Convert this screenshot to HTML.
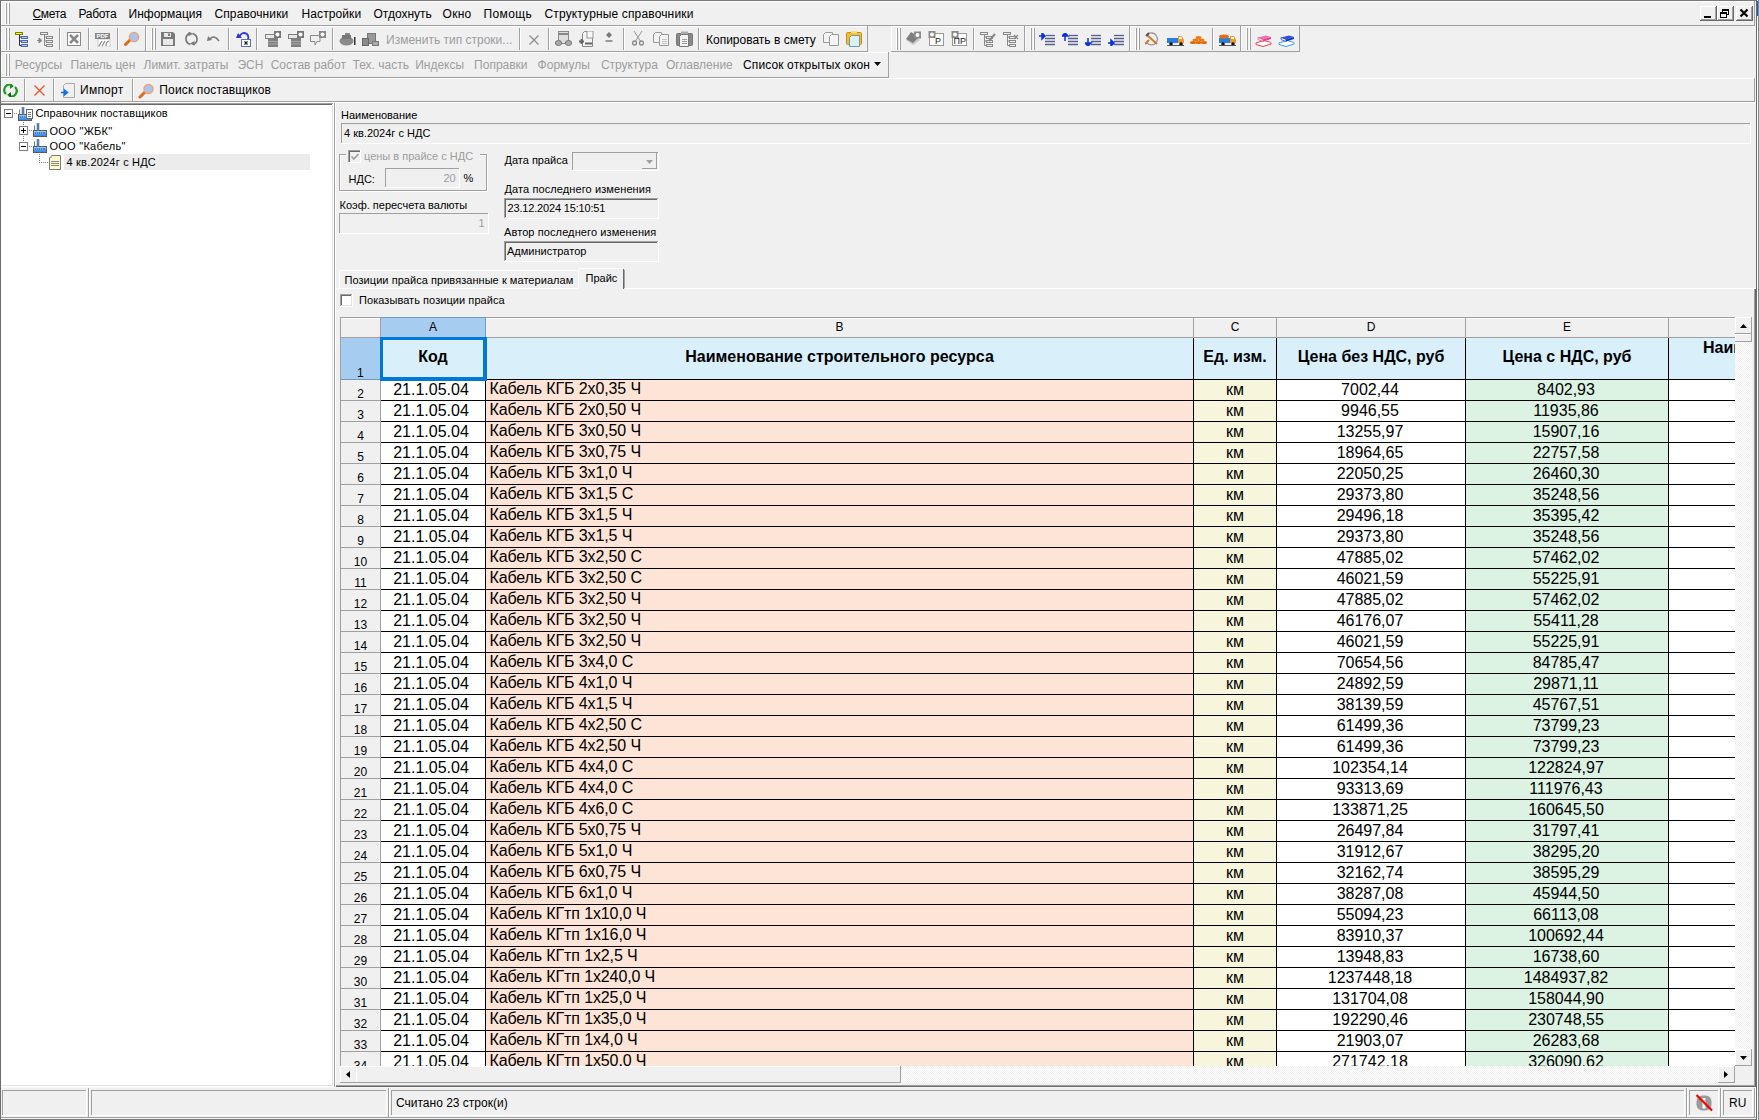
<!DOCTYPE html>
<html><head><meta charset="utf-8"><title>UI</title>
<style>
*{margin:0;padding:0;box-sizing:border-box}
html,body{width:1759px;height:1120px;overflow:hidden}
body{position:relative;background:#f0f0f0;font-family:"Liberation Sans",sans-serif;color:#000}
.a{position:absolute}
.t{position:absolute;white-space:pre;line-height:1}
.f12{font-size:12px}
.f11{font-size:11px}
.f16{font-size:16px}
.dis{color:#9d9d9d}
.hl{position:absolute;height:1px}
.vl{position:absolute;width:1px}
.tb{position:absolute;border-top:1px solid #fff;border-left:1px solid #fff;border-right:1px solid #a0a0a0;border-bottom:1px solid #a0a0a0}
.grip{position:absolute;width:2px;border-left:1px solid #fff;border-right:1px solid #a0a0a0}
.sep{position:absolute;width:2px;border-left:1px solid #a0a0a0;border-right:1px solid #fff}

</style></head><body>
<div class="a" style="left:0px;top:0px;width:1759px;height:1px;background:#7a7a7a;"></div>
<div class="a" style="left:0px;top:0px;width:1px;height:1120px;background:#6d6d6d;"></div>
<div class="a" style="left:0px;top:1119px;width:1759px;height:1px;background:#7a7a7a;"></div>
<div class="a" style="left:1756px;top:0px;width:1px;height:1120px;background:#6a6a6a;"></div>
<div class="a" style="left:1757px;top:0px;width:1px;height:1120px;background:#ffffff;"></div>
<div class="a" style="left:1758px;top:0px;width:1px;height:1120px;background:#888888;"></div>
<div class="a" style="left:1757px;top:1px;width:1px;height:15px;background:#1a5fc8;"></div>
<div class="a" style="left:1px;top:1px;width:1754px;height:1px;background:#fff;"></div>
<div class="a" style="left:1px;top:1px;width:1px;height:25px;background:#fff;"></div>
<div class="a" style="left:1px;top:25px;width:1754px;height:1px;background:#a0a0a0;"></div>
<div class="a" style="left:1754px;top:1px;width:1px;height:25px;background:#a0a0a0;"></div>
<div class="a" style="left:5px;top:3px;width:1px;height:21px;background:#fff;"></div><div class="a" style="left:6px;top:3px;width:1px;height:21px;background:#a0a0a0;"></div><div class="a" style="left:8px;top:3px;width:1px;height:21px;background:#fff;"></div><div class="a" style="left:9px;top:3px;width:1px;height:21px;background:#a0a0a0;"></div>
<div class="t f12 " style="left:32.5px;top:7.84px;letter-spacing:-0.3px">Смета</div>
<div class="t f12 " style="left:78.5px;top:7.84px;letter-spacing:-0.3px">Работа</div>
<div class="t f12 " style="left:128.5px;top:7.84px;letter-spacing:0px">Информация</div>
<div class="t f12 " style="left:214.5px;top:7.84px;letter-spacing:0.1px">Справочники</div>
<div class="t f12 " style="left:301.5px;top:7.84px;letter-spacing:0.1px">Настройки</div>
<div class="t f12 " style="left:373.5px;top:7.84px;letter-spacing:0px">Отдохнуть</div>
<div class="t f12 " style="left:442.5px;top:7.84px;letter-spacing:0.3px">Окно</div>
<div class="t f12 " style="left:483.5px;top:7.84px;letter-spacing:0.4px">Помощь</div>
<div class="t f12 " style="left:544.5px;top:7.84px;letter-spacing:0.15px">Структурные справочники</div>
<div class="a" style="left:33px;top:19px;width:9px;height:1px;background:#000;"></div>
<div class="a" style="left:1700px;top:6px;width:17px;height:15px;background:#f0f0f0;"></div><div class="a" style="left:1700px;top:6px;width:17px;height:1px;background:#fff;"></div><div class="a" style="left:1700px;top:6px;width:1px;height:15px;background:#fff;"></div><div class="a" style="left:1700px;top:20px;width:17px;height:1px;background:#696969;"></div><div class="a" style="left:1716px;top:6px;width:1px;height:15px;background:#696969;"></div>
<div class="a" style="left:1701px;top:19px;width:15px;height:1px;background:#a0a0a0;"></div>
<div class="a" style="left:1715px;top:7px;width:1px;height:13px;background:#a0a0a0;"></div>
<div class="a" style="left:1717px;top:6px;width:17px;height:15px;background:#f0f0f0;"></div><div class="a" style="left:1717px;top:6px;width:17px;height:1px;background:#fff;"></div><div class="a" style="left:1717px;top:6px;width:1px;height:15px;background:#fff;"></div><div class="a" style="left:1717px;top:20px;width:17px;height:1px;background:#696969;"></div><div class="a" style="left:1733px;top:6px;width:1px;height:15px;background:#696969;"></div>
<div class="a" style="left:1718px;top:19px;width:15px;height:1px;background:#a0a0a0;"></div>
<div class="a" style="left:1732px;top:7px;width:1px;height:13px;background:#a0a0a0;"></div>
<div class="a" style="left:1736px;top:6px;width:17px;height:15px;background:#f0f0f0;"></div><div class="a" style="left:1736px;top:6px;width:17px;height:1px;background:#fff;"></div><div class="a" style="left:1736px;top:6px;width:1px;height:15px;background:#fff;"></div><div class="a" style="left:1736px;top:20px;width:17px;height:1px;background:#696969;"></div><div class="a" style="left:1752px;top:6px;width:1px;height:15px;background:#696969;"></div>
<div class="a" style="left:1737px;top:19px;width:15px;height:1px;background:#a0a0a0;"></div>
<div class="a" style="left:1751px;top:7px;width:1px;height:13px;background:#a0a0a0;"></div>
<div class="a" style="left:1704px;top:16px;width:7px;height:2px;background:#000;"></div>
<svg class="a" style="left:1719px;top:8px" width="12" height="11" viewBox="0 0 12 11"><rect x="3.5" y="1.5" width="6" height="5" fill="none" stroke="#000"/><rect x="3" y="1" width="7" height="2" fill="#000"/><rect x="1.5" y="4.5" width="6" height="5" fill="#f0f0f0" stroke="#000"/><rect x="1" y="4" width="7" height="2" fill="#000"/></svg>
<svg class="a" style="left:1739px;top:8px" width="10" height="10" viewBox="0 0 10 10"><path d="M1.5 1.5L8.5 8.5M8.5 1.5L1.5 8.5" stroke="#000" stroke-width="2.2"/></svg>
<div class="a" style="left:1px;top:26px;width:145px;height:1px;background:#fff;"></div><div class="a" style="left:1px;top:26px;width:1px;height:26px;background:#fff;"></div><div class="a" style="left:1px;top:51px;width:145px;height:1px;background:#a0a0a0;"></div><div class="a" style="left:145px;top:26px;width:1px;height:26px;background:#a0a0a0;"></div>
<div class="a" style="left:146px;top:26px;width:722px;height:1px;background:#fff;"></div><div class="a" style="left:146px;top:26px;width:1px;height:26px;background:#fff;"></div><div class="a" style="left:146px;top:51px;width:722px;height:1px;background:#a0a0a0;"></div><div class="a" style="left:867px;top:26px;width:1px;height:26px;background:#a0a0a0;"></div>
<div class="a" style="left:891px;top:26px;width:134px;height:1px;background:#fff;"></div><div class="a" style="left:891px;top:26px;width:1px;height:26px;background:#fff;"></div><div class="a" style="left:891px;top:51px;width:134px;height:1px;background:#a0a0a0;"></div><div class="a" style="left:1024px;top:26px;width:1px;height:26px;background:#a0a0a0;"></div>
<div class="a" style="left:1025px;top:26px;width:105px;height:1px;background:#fff;"></div><div class="a" style="left:1025px;top:26px;width:1px;height:26px;background:#fff;"></div><div class="a" style="left:1025px;top:51px;width:105px;height:1px;background:#a0a0a0;"></div><div class="a" style="left:1129px;top:26px;width:1px;height:26px;background:#a0a0a0;"></div>
<div class="a" style="left:1130px;top:26px;width:111px;height:1px;background:#fff;"></div><div class="a" style="left:1130px;top:26px;width:1px;height:26px;background:#fff;"></div><div class="a" style="left:1130px;top:51px;width:111px;height:1px;background:#a0a0a0;"></div><div class="a" style="left:1240px;top:26px;width:1px;height:26px;background:#a0a0a0;"></div>
<div class="a" style="left:1241px;top:26px;width:59px;height:1px;background:#fff;"></div><div class="a" style="left:1241px;top:26px;width:1px;height:26px;background:#fff;"></div><div class="a" style="left:1241px;top:51px;width:59px;height:1px;background:#a0a0a0;"></div><div class="a" style="left:1299px;top:26px;width:1px;height:26px;background:#a0a0a0;"></div>
<div class="a" style="left:5px;top:28px;width:1px;height:22px;background:#fff;"></div><div class="a" style="left:6px;top:28px;width:1px;height:22px;background:#a0a0a0;"></div><div class="a" style="left:8px;top:28px;width:1px;height:22px;background:#fff;"></div><div class="a" style="left:9px;top:28px;width:1px;height:22px;background:#a0a0a0;"></div>
<div class="a" style="left:151px;top:28px;width:1px;height:22px;background:#fff;"></div><div class="a" style="left:152px;top:28px;width:1px;height:22px;background:#a0a0a0;"></div><div class="a" style="left:154px;top:28px;width:1px;height:22px;background:#fff;"></div><div class="a" style="left:155px;top:28px;width:1px;height:22px;background:#a0a0a0;"></div>
<div class="a" style="left:896px;top:28px;width:1px;height:22px;background:#fff;"></div><div class="a" style="left:897px;top:28px;width:1px;height:22px;background:#a0a0a0;"></div><div class="a" style="left:899px;top:28px;width:1px;height:22px;background:#fff;"></div><div class="a" style="left:900px;top:28px;width:1px;height:22px;background:#a0a0a0;"></div>
<div class="a" style="left:1030px;top:28px;width:1px;height:22px;background:#fff;"></div><div class="a" style="left:1031px;top:28px;width:1px;height:22px;background:#a0a0a0;"></div><div class="a" style="left:1033px;top:28px;width:1px;height:22px;background:#fff;"></div><div class="a" style="left:1034px;top:28px;width:1px;height:22px;background:#a0a0a0;"></div>
<div class="a" style="left:1135px;top:28px;width:1px;height:22px;background:#fff;"></div><div class="a" style="left:1136px;top:28px;width:1px;height:22px;background:#a0a0a0;"></div><div class="a" style="left:1138px;top:28px;width:1px;height:22px;background:#fff;"></div><div class="a" style="left:1139px;top:28px;width:1px;height:22px;background:#a0a0a0;"></div>
<div class="a" style="left:1246px;top:28px;width:1px;height:22px;background:#fff;"></div><div class="a" style="left:1247px;top:28px;width:1px;height:22px;background:#a0a0a0;"></div><div class="a" style="left:1249px;top:28px;width:1px;height:22px;background:#fff;"></div><div class="a" style="left:1250px;top:28px;width:1px;height:22px;background:#a0a0a0;"></div>
<div class="a" style="left:59px;top:28px;width:1px;height:22px;background:#a0a0a0;"></div><div class="a" style="left:60px;top:28px;width:1px;height:22px;background:#fff;"></div>
<div class="a" style="left:88px;top:28px;width:1px;height:22px;background:#a0a0a0;"></div><div class="a" style="left:89px;top:28px;width:1px;height:22px;background:#fff;"></div>
<div class="a" style="left:117px;top:28px;width:1px;height:22px;background:#a0a0a0;"></div><div class="a" style="left:118px;top:28px;width:1px;height:22px;background:#fff;"></div>
<div class="a" style="left:228px;top:28px;width:1px;height:22px;background:#a0a0a0;"></div><div class="a" style="left:229px;top:28px;width:1px;height:22px;background:#fff;"></div>
<div class="a" style="left:256px;top:28px;width:1px;height:22px;background:#a0a0a0;"></div><div class="a" style="left:257px;top:28px;width:1px;height:22px;background:#fff;"></div>
<div class="a" style="left:332px;top:28px;width:1px;height:22px;background:#a0a0a0;"></div><div class="a" style="left:333px;top:28px;width:1px;height:22px;background:#fff;"></div>
<div class="a" style="left:519px;top:28px;width:1px;height:22px;background:#a0a0a0;"></div><div class="a" style="left:520px;top:28px;width:1px;height:22px;background:#fff;"></div>
<div class="a" style="left:548px;top:28px;width:1px;height:22px;background:#a0a0a0;"></div><div class="a" style="left:549px;top:28px;width:1px;height:22px;background:#fff;"></div>
<div class="a" style="left:623px;top:28px;width:1px;height:22px;background:#a0a0a0;"></div><div class="a" style="left:624px;top:28px;width:1px;height:22px;background:#fff;"></div>
<div class="a" style="left:698px;top:28px;width:1px;height:22px;background:#a0a0a0;"></div><div class="a" style="left:699px;top:28px;width:1px;height:22px;background:#fff;"></div>
<div class="a" style="left:973px;top:28px;width:1px;height:22px;background:#a0a0a0;"></div><div class="a" style="left:974px;top:28px;width:1px;height:22px;background:#fff;"></div>
<div class="a" style="left:1212px;top:28px;width:1px;height:22px;background:#a0a0a0;"></div><div class="a" style="left:1213px;top:28px;width:1px;height:22px;background:#fff;"></div>
<div class="a" style="left:1px;top:52px;width:888px;height:1px;background:#fff;"></div><div class="a" style="left:1px;top:52px;width:1px;height:26px;background:#fff;"></div><div class="a" style="left:1px;top:77px;width:888px;height:1px;background:#a0a0a0;"></div><div class="a" style="left:888px;top:52px;width:1px;height:26px;background:#a0a0a0;"></div>
<div class="a" style="left:5px;top:54px;width:1px;height:22px;background:#fff;"></div><div class="a" style="left:6px;top:54px;width:1px;height:22px;background:#a0a0a0;"></div><div class="a" style="left:8px;top:54px;width:1px;height:22px;background:#fff;"></div><div class="a" style="left:9px;top:54px;width:1px;height:22px;background:#a0a0a0;"></div>
<div class="t f12 dis" style="left:14.8px;top:58.84px;">Ресурсы</div>
<div class="t f12 dis" style="left:70.6px;top:58.84px;">Панель цен</div>
<div class="t f12 dis" style="left:143.5px;top:58.84px;">Лимит. затраты</div>
<div class="t f12 dis" style="left:237.4px;top:58.84px;">ЭСН</div>
<div class="t f12 dis" style="left:270.7px;top:58.84px;">Состав работ</div>
<div class="t f12 dis" style="left:352.5px;top:58.84px;">Тех. часть</div>
<div class="t f12 dis" style="left:415.2px;top:58.84px;">Индексы</div>
<div class="t f12 dis" style="left:474.1px;top:58.84px;">Поправки</div>
<div class="t f12 dis" style="left:537.6px;top:58.84px;">Формулы</div>
<div class="t f12 dis" style="left:600.9px;top:58.84px;">Структура</div>
<div class="t f12 dis" style="left:665.9px;top:58.84px;">Оглавление</div>
<div class="t f12 " style="left:743px;top:58.84px;letter-spacing:0.12px">Список открытых окон</div>
<svg class="a" style="left:874px;top:62px" width="8" height="5"><path d="M0 0H7L3.5 4Z" fill="#000"/></svg>
<div class="a" style="left:1px;top:78px;width:1754px;height:1px;background:#fff;"></div><div class="a" style="left:1px;top:78px;width:1px;height:24px;background:#fff;"></div><div class="a" style="left:1px;top:101px;width:1754px;height:1px;background:#a0a0a0;"></div><div class="a" style="left:1754px;top:78px;width:1px;height:24px;background:#a0a0a0;"></div>
<div class="a" style="left:24px;top:79px;width:1px;height:22px;background:#a0a0a0;"></div><div class="a" style="left:25px;top:79px;width:1px;height:22px;background:#fff;"></div>
<div class="a" style="left:53px;top:79px;width:1px;height:22px;background:#a0a0a0;"></div><div class="a" style="left:54px;top:79px;width:1px;height:22px;background:#fff;"></div>
<div class="a" style="left:132px;top:79px;width:1px;height:22px;background:#a0a0a0;"></div><div class="a" style="left:133px;top:79px;width:1px;height:22px;background:#fff;"></div>
<div class="t f12 " style="left:80px;top:84.34px;letter-spacing:0.25px">Импорт</div>
<div class="t f12 " style="left:159.3px;top:84.34px;letter-spacing:0.15px">Поиск поставщиков</div>
<div class="t f12 dis" style="left:386px;top:33.84px;">Изменить тип строки...</div>
<div class="t f12 " style="left:706px;top:33.84px;">Копировать в смету</div>
<svg class="a" style="left:15px;top:32px" width="14" height="15" viewBox="0 0 14 15"><rect x="0.5" y="0.5" width="7" height="2" fill="#ff0" stroke="#808000"/><path d="M4.5 3V13.5H6" stroke="#1e2a5a" fill="none"/><path d="M4.5 5H6M4.5 9H6" stroke="#1e2a5a"/><rect x="6.5" y="4.5" width="6" height="2" fill="#a8cdf4" stroke="#4f6c9c"/><rect x="6.5" y="8.5" width="6" height="2" fill="#a8cdf4" stroke="#4f6c9c"/><rect x="6.5" y="12.5" width="6" height="2" fill="#a8cdf4" stroke="#4f6c9c"/></svg>
<svg class="a" style="left:37px;top:32px" width="17" height="15" viewBox="0 0 17 15"><rect x="3.5" y="0.5" width="7" height="2" fill="#eee" stroke="#888"/><path d="M7.5 3V13.5H9M7.5 5H9M7.5 9H9" stroke="#888" fill="none"/><rect x="9.5" y="4.5" width="6" height="2" fill="#eee" stroke="#888"/><rect x="9.5" y="8.5" width="6" height="2" fill="#eee" stroke="#888"/><rect x="9.5" y="12.5" width="6" height="2" fill="#eee" stroke="#888"/><path d="M0 8.5H3M2 6L5 8.5L2 11Z" stroke="#888" fill="#888"/></svg>
<svg class="a" style="left:67px;top:32px" width="14" height="14" viewBox="0 0 14 14"><rect x="0.5" y="0.5" width="13" height="13" fill="#fff" stroke="#888"/><path d="M3 3L11 11M11 3L3 11" stroke="#888" stroke-width="2.5"/></svg>
<svg class="a" style="left:95px;top:32px" width="16" height="15" viewBox="0 0 16 15"><rect x="3" y="7" width="12" height="8" fill="#fff" stroke="#ccc"/><path d="M4 14L7 9M7 14L10 9M11 14Q11 10 14 9" stroke="#888" stroke-width="1.3" fill="none"/><rect x="0" y="1" width="15" height="6" fill="#858585"/><text x="1.5" y="6" font-size="6" font-weight="bold" fill="#fff" font-family="Liberation Sans">PDF</text></svg>
<svg class="a" style="left:123px;top:31px" width="17" height="16" viewBox="0 0 17 16"><path d="M2.5 13.5L8 8" stroke="#e06a18" stroke-width="3" stroke-linecap="round"/><circle cx="11" cy="6" r="4.6" fill="#a9c4ee" stroke="#f0a070" stroke-width="1.4"/></svg>
<svg class="a" style="left:161px;top:32px" width="15" height="14" viewBox="0 0 15 14"><path d="M0 0H12L14 2V14H0Z" fill="#7a7a7a"/><rect x="3" y="1" width="7" height="4" fill="#e8e8e8"/><rect x="7" y="1.5" width="2" height="2.5" fill="#7a7a7a"/><rect x="2" y="7" width="10" height="6" fill="#e8e8e8"/></svg>
<svg class="a" style="left:184px;top:32px" width="15" height="14" viewBox="0 0 15 14"><path d="M6.5 12.3A5.6 5.6 0 0 1 5.5 1.6" stroke="#7a7a7a" stroke-width="1.7" fill="none"/><path d="M8.5 1.7A5.6 5.6 0 0 1 9.5 12.4" stroke="#7a7a7a" stroke-width="1.7" fill="none"/><path d="M4.5 -0.5L9 1.8L4.5 4.3Z" fill="#7a7a7a"/><path d="M10.5 13.8L6 11.6L10.5 9Z" fill="#7a7a7a"/></svg>
<svg class="a" style="left:207px;top:35px" width="13" height="8" viewBox="0 0 13 8"><path d="M3 4Q7 -1 12 6" stroke="#7a7a7a" stroke-width="1.5" fill="none"/><path d="M0 6L1 1L5 5Z" fill="#7a7a7a"/></svg>
<svg class="a" style="left:236px;top:32px" width="15" height="15" viewBox="0 0 15 15"><path d="M3 5Q6 -1 11 2Q13 4 12 8" stroke="#3333e0" stroke-width="1.8" fill="none"/><path d="M0 6L2 1L6 6Z" fill="#3333e0"/><rect x="5.5" y="7.5" width="9" height="7" fill="#fff" stroke="#5a6fb0"/><path d="M8 9.5L12 12.5M12 9.5L8 12.5M10 9V13" stroke="#111" stroke-width="0.9"/></svg>
<svg class="a" style="left:265px;top:31px" width="16" height="16" viewBox="0 0 16 16"><rect x="3" y="7" width="10" height="9" fill="#808080"/><path d="M3 10.5H13M3 13H13" stroke="#a8a8a8"/><rect x="0.5" y="3.5" width="11" height="4" fill="#e8e8e8" stroke="#808080"/><rect x="9.0" y="0.0" width="7" height="7" fill="#777"/><circle cx="12.5" cy="3.5" r="2" fill="#fff"/></svg>
<svg class="a" style="left:288px;top:31px" width="16" height="16" viewBox="0 0 16 16"><rect x="3" y="7" width="10" height="9" fill="#808080"/><path d="M3 10.5H13M3 13H13" stroke="#a8a8a8"/><rect x="0.5" y="3.5" width="11" height="4" fill="#e8e8e8" stroke="#808080"/><rect x="9.0" y="0.0" width="7" height="7" fill="#777"/><circle cx="12.5" cy="3.5" r="2" fill="#fff"/></svg>
<svg class="a" style="left:310px;top:31px" width="16" height="15" viewBox="0 0 16 15"><path d="M0.5 4.5H10V10.5H7L5 14V10.5H0.5Z" fill="none" stroke="#888"/><rect x="9.0" y="0.0" width="7" height="7" fill="#888"/><circle cx="12.5" cy="3.5" r="2" fill="#fff"/></svg>
<svg class="a" style="left:339px;top:33px" width="17" height="13" viewBox="0 0 17 13"><ellipse cx="7.5" cy="8" rx="7" ry="4.5" fill="#8a8a8a"/><rect x="3" y="2" width="9" height="4" fill="#777"/><rect x="6" y="0" width="5" height="2" fill="#888"/><rect x="15" y="4" width="1.5" height="8" fill="#333"/></svg>
<svg class="a" style="left:362px;top:33px" width="17" height="13" viewBox="0 0 17 13"><rect x="5.5" y="0.5" width="8" height="10" fill="#999" stroke="#777"/><rect x="0.5" y="5.5" width="6" height="7" fill="#8a8a8a" stroke="#666"/><rect x="10.5" y="8.5" width="6" height="4" fill="#aaa" stroke="#777"/></svg>
<svg class="a" style="left:529px;top:35px" width="10" height="10" viewBox="0 0 10 10"><path d="M0.5 0.5L9.5 9.5M9.5 0.5L0.5 9.5" stroke="#8c8c8c" stroke-width="1.2"/></svg>
<svg class="a" style="left:555px;top:31px" width="17" height="16" viewBox="0 0 17 16"><rect x="3.5" y="0.5" width="10" height="12" fill="#ddd" stroke="#888"/><rect x="4" y="2" width="9" height="2" fill="#888"/><ellipse cx="3.5" cy="12" rx="3.2" ry="2.5" fill="#aaa" stroke="#777"/><ellipse cx="13.5" cy="12" rx="3.2" ry="2.5" fill="#aaa" stroke="#777"/></svg>
<svg class="a" style="left:579px;top:31px" width="15" height="16" viewBox="0 0 15 16"><path d="M3.5 2.5L5.5 0.5H13.5V15.5H3.5Z" fill="#f4f4f4" stroke="#888"/><rect x="8" y="0" width="6" height="7" fill="#f8f8f8" stroke="#999"/><path d="M0 10.5H5M2.5 8V13M6 12.5H13" stroke="#666" stroke-width="1.8"/></svg>
<svg class="a" style="left:605px;top:31px" width="8" height="13" viewBox="0 0 8 13"><path d="M4 1L7 4L4 7L1 4Z" fill="#777"/><rect x="0.5" y="9" width="7" height="2" fill="#999"/></svg>
<svg class="a" style="left:632px;top:31px" width="12" height="15" viewBox="0 0 12 15"><path d="M2 0L9 11M10 0L3 11" stroke="#999" stroke-width="1"/><circle cx="2.5" cy="12" r="2" fill="none" stroke="#888" stroke-width="1.3"/><circle cx="9.5" cy="12" r="2" fill="none" stroke="#888" stroke-width="1.3"/></svg>
<svg class="a" style="left:653px;top:32px" width="16" height="14" viewBox="0 0 16 14"><path d="M0.5 2.5L2.5 0.5H8.5V10.5H0.5Z" fill="#f2f2f2" stroke="#999"/><path d="M6.5 4.5L8.5 2.5H15.5V13.5H6.5Z" fill="#f2f2f2" stroke="#999"/><path d="M9 7.5H14M9 9.5H14M9 11.5H14" stroke="#b0b0b0" stroke-width="0.7"/></svg>
<svg class="a" style="left:676px;top:31px" width="17" height="16" viewBox="0 0 17 16"><rect x="0.5" y="2.5" width="16" height="12" rx="1" fill="#888" stroke="#777"/><rect x="5" y="0.5" width="7" height="3" fill="#aaa"/><path d="M3.5 5.5L5.5 3.5H12.5V15.5H3.5Z" fill="#f2f2f2" stroke="#777"/><path d="M6 8.5H11M6 10.5H11M6 12.5H11" stroke="#777" stroke-width="0.7"/></svg>
<svg class="a" style="left:823px;top:32px" width="17" height="15" viewBox="0 0 17 15"><path d="M0.5 2.5L2.5 0.5H9.5V10.5H0.5Z" fill="#f4f4f4" stroke="#9a9a9a" stroke-width="1"/><path d="M6.5 4.5L8.5 2.5H15.5V13.5H6.5Z" fill="#f4f4f4" stroke="#9a9a9a"/></svg>
<svg class="a" style="left:846px;top:31px" width="17" height="16" viewBox="0 0 17 16"><rect x="0.5" y="1.5" width="15" height="12" rx="1" fill="#ffba20" stroke="#c08a30"/><rect x="5" y="0" width="6" height="2.5" rx="1" fill="#f8e070"/><path d="M3.5 6.5L5.5 4.5H13.5V15.5H3.5Z" fill="#d6f2f6" stroke="#6f9aa6"/></svg>
<svg class="a" style="left:905px;top:31px" width="17" height="16" viewBox="0 0 17 16"><path d="M1 9L8 4L15 9L8 14Z" fill="#c8c8c8"/><path d="M1 8L6 1L14 6L8 12Z" fill="#7f7f7f"/><rect x="9.0" y="0.5" width="7" height="7" fill="#8a8a8a"/><circle cx="12.5" cy="4" r="2" fill="#fff"/></svg>
<svg class="a" style="left:928px;top:31px" width="17" height="16" viewBox="0 0 17 16"><rect x="1.5" y="2.5" width="14" height="12" fill="#fff" stroke="#999"/><rect x="0.5" y="0.0" width="7" height="7" fill="#8a8a8a"/><circle cx="4" cy="3.5" r="2" fill="#fff"/><text x="7" y="13" font-size="9" font-family="Liberation Sans" fill="#222">P</text></svg>
<svg class="a" style="left:951px;top:31px" width="17" height="16" viewBox="0 0 17 16"><rect x="1.5" y="2.5" width="14" height="12" fill="#fff" stroke="#999"/><rect x="0.5" y="0.0" width="7" height="7" fill="#8a8a8a"/><circle cx="4" cy="3.5" r="2" fill="#fff"/><text x="2.5" y="13" font-size="9" font-family="Liberation Sans" fill="#222">ПР</text></svg>
<svg class="a" style="left:980px;top:32px" width="16" height="15" viewBox="0 0 16 15"><rect x="0.5" y="0.5" width="7" height="2" fill="#eee" stroke="#888"/><path d="M4.5 3V13.5H6M4.5 5H6M4.5 9H6" stroke="#888" fill="none"/><rect x="6.5" y="4.5" width="6" height="2" fill="#eee" stroke="#888"/><rect x="6.5" y="8.5" width="6" height="2" fill="#eee" stroke="#888"/><rect x="6.5" y="12.5" width="6" height="2" fill="#eee" stroke="#888"/><path d="M9 9L15 2" stroke="#888" stroke-width="2"/></svg>
<svg class="a" style="left:1003px;top:32px" width="16" height="15" viewBox="0 0 16 15"><rect x="0.5" y="0.5" width="7" height="2" fill="#eee" stroke="#888"/><path d="M4.5 3V13.5H6M4.5 5H6M4.5 9H6" stroke="#888" fill="none"/><rect x="6.5" y="4.5" width="6" height="2" fill="#eee" stroke="#888"/><rect x="6.5" y="8.5" width="6" height="2" fill="#eee" stroke="#888"/><rect x="6.5" y="12.5" width="6" height="2" fill="#eee" stroke="#888"/><path d="M11 3L15 7M15 3L11 7" stroke="#888" stroke-width="1.2"/></svg>
<svg class="a" style="left:1039px;top:33px" width="17" height="13" viewBox="0 0 17 13"><path d="M7 2.5H16" stroke="#55608f" stroke-width="1.3"/><path d="M6 5.5H16M6 8.5H16M6 11.5H16" stroke="#55608f" stroke-width="1.3"/><path d="M0 3H4M3 0L6 3L3 6Z" stroke="#0c2ee0" fill="#0c2ee0" stroke-width="1.5"/></svg>
<svg class="a" style="left:1062px;top:33px" width="17" height="13" viewBox="0 0 17 13"><path d="M7 2.5H16" stroke="#55608f" stroke-width="1.3"/><path d="M6 5.5H16M6 8.5H16M6 11.5H16" stroke="#55608f" stroke-width="1.3"/><path d="M3 8V3M0 3L3 0L6 3Z" stroke="#0c2ee0" fill="#0c2ee0" stroke-width="1.5"/></svg>
<svg class="a" style="left:1085px;top:33px" width="17" height="13" viewBox="0 0 17 13"><path d="M6 2.5H16" stroke="#55608f" stroke-width="1.3"/><path d="M6 5.5H16M6 8.5H16M6 11.5H16" stroke="#55608f" stroke-width="1.3"/><path d="M3 5V10M0 10L3 13L6 10Z" stroke="#0c2ee0" fill="#0c2ee0" stroke-width="1.5"/></svg>
<svg class="a" style="left:1108px;top:33px" width="17" height="13" viewBox="0 0 17 13"><path d="M6 2.5H16" stroke="#55608f" stroke-width="1.3"/><path d="M6 5.5H16M6 8.5H16M6 11.5H16" stroke="#55608f" stroke-width="1.3"/><path d="M0 10H4M3 7L6 10L3 13Z" stroke="#0c2ee0" fill="#0c2ee0" stroke-width="1.5"/></svg>
<svg class="a" style="left:1145px;top:32px" width="15" height="14" viewBox="0 0 15 14"><path d="M3 2A6 6 0 1 1 2 11" stroke="#999" stroke-width="1.3" fill="none"/><path d="M2 3L12 12" stroke="#c87830" stroke-width="2"/><path d="M0 12L4 8" stroke="#c87830" stroke-width="2"/><path d="M1 4L4 1" stroke="#555" stroke-width="2"/></svg>
<svg class="a" style="left:1167px;top:35px" width="17" height="11" viewBox="0 0 17 11"><rect x="0" y="3" width="11" height="5" fill="#2a7ee0"/><path d="M11 1H15L17 5V8H11Z" fill="#f29a20"/><rect x="12" y="2" width="3" height="2" fill="#fff"/><circle cx="4" cy="9" r="1.8" fill="#111"/><circle cx="14" cy="9" r="1.8" fill="#111"/><rect x="0" y="10" width="17" height="1" fill="#555"/></svg>
<svg class="a" style="left:1190px;top:36px" width="17" height="8" viewBox="0 0 17 8"><ellipse cx="8.5" cy="1.5" rx="3" ry="1.5" fill="#ee7a10"/><ellipse cx="5.5" cy="4" rx="3" ry="1.5" fill="#ee7a10"/><ellipse cx="11.5" cy="4" rx="3" ry="1.5" fill="#ee7a10"/><ellipse cx="3" cy="6.5" rx="3" ry="1.5" fill="#e06a08"/><ellipse cx="8.5" cy="6.5" rx="3" ry="1.5" fill="#e06a08"/><ellipse cx="14" cy="6.5" rx="3" ry="1.5" fill="#e06a08"/></svg>
<svg class="a" style="left:1219px;top:34px" width="17" height="12" viewBox="0 0 17 12"><g transform="translate(0,1)"><rect x="0" y="3" width="11" height="5" fill="#2a7ee0"/><path d="M11 1H15L17 5V8H11Z" fill="#f29a20"/><rect x="12" y="2" width="3" height="2" fill="#fff"/><circle cx="4" cy="9" r="1.8" fill="#111"/><circle cx="14" cy="9" r="1.8" fill="#111"/><rect x="0" y="10" width="17" height="1" fill="#555"/></g><ellipse cx="5" cy="2.5" rx="5" ry="2" fill="#e07018"/></svg>
<svg class="a" style="left:1255px;top:34px" width="17" height="13" viewBox="0 0 17 13"><path d="M1 9L9 6.5L16 8.5L8 11Z" fill="#fff" stroke="#e84050" stroke-width="1"/><path d="M1 9V10.5L8 12.5L16 10V8.5" fill="#fff" stroke="#e84050" stroke-width="1"/><path d="M3 3.5L11 1.5L16 3L8 5.5Z" fill="#f070c0"/><path d="M3 3.5V5.5L8 7.5V5.5Z" fill="#fff" stroke="#e04080" stroke-width="0.7"/><path d="M8 5.5V7.5L16 5V3Z" fill="#e04080"/></svg>
<svg class="a" style="left:1278px;top:34px" width="17" height="13" viewBox="0 0 17 13"><path d="M1 9L9 6.5L16 8.5L8 11Z" fill="#fff" stroke="#30a0e0" stroke-width="1"/><path d="M1 9V10.5L8 12.5L16 10V8.5" fill="#fff" stroke="#30a0e0" stroke-width="1"/><path d="M3 3.5L11 1.5L16 3L8 5.5Z" fill="#3050e0"/><path d="M3 3.5V5.5L8 7.5V5.5Z" fill="#fff" stroke="#2030b0" stroke-width="0.7"/><path d="M8 5.5V7.5L16 5V3Z" fill="#2030b0"/></svg>
<svg class="a" style="left:3px;top:84px" width="15" height="13" viewBox="0 0 15 13"><path d="M3 10A5.5 5.5 0 0 1 9 1" stroke="#1a9a1a" stroke-width="2.2" fill="none"/><path d="M12 3A5.5 5.5 0 0 1 6 12" stroke="#1a9a1a" stroke-width="2.2" fill="none"/><path d="M7 0L11 2L7 5Z" fill="#1a8a1a"/><path d="M8 13L4 11L8 8Z" fill="#0a6a0a"/></svg>
<svg class="a" style="left:34px;top:85px" width="11" height="11" viewBox="0 0 11 11"><path d="M0.5 0.5L10.5 10.5M10.5 0.5L0.5 10.5" stroke="#f05028" stroke-width="1.3"/></svg>
<svg class="a" style="left:61px;top:83px" width="15" height="15" viewBox="0 0 15 15"><path d="M2.5 2.5L4.5 0.5H13.5V14.5H2.5Z" fill="#f0f0f0" stroke="#aaa"/><path d="M0 9.5H5M3.5 7L6.5 9.5L3.5 12Z" stroke="#1a70e0" fill="#1a70e0" stroke-width="1.5"/></svg>
<svg class="a" style="left:138px;top:83px" width="17" height="16" viewBox="0 0 17 16"><path d="M2 14L7 9" stroke="#e06a18" stroke-width="3" stroke-linecap="round"/><circle cx="10.5" cy="6" r="4.5" fill="#a9c4ee" stroke="#f0a070" stroke-width="1.4"/></svg>
<div class="a" style="left:1px;top:102px;width:1754px;height:1px;background:#fff;"></div>
<div class="a" style="left:1px;top:103px;width:333px;height:984px;background:#fff;"></div>
<div class="a" style="left:1px;top:103px;width:332px;height:1px;background:#a0a0a0;"></div>
<div class="a" style="left:1px;top:104px;width:331px;height:1px;background:#696969;"></div>
<div class="a" style="left:332px;top:105px;width:1px;height:981px;background:#e3e3e3;"></div>
<div class="a" style="left:1px;top:1085px;width:332px;height:1px;background:#e3e3e3;"></div>
<div class="a" style="left:334px;top:103px;width:1px;height:984px;background:#a0a0a0;"></div>
<div class="a" style="left:335px;top:103px;width:1px;height:984px;background:#fff;"></div>
<div class="a" style="left:4px;top:109px;width:9px;height:9px;background:#fff;"></div><div class="a" style="left:4px;top:109px;width:9px;height:1px;background:#808080;"></div><div class="a" style="left:4px;top:109px;width:1px;height:9px;background:#808080;"></div><div class="a" style="left:4px;top:117px;width:9px;height:1px;background:#808080;"></div><div class="a" style="left:12px;top:109px;width:1px;height:9px;background:#808080;"></div><div class="a" style="left:6px;top:113px;width:5px;height:1px;background:#000;"></div>
<div class="a" style="left:19px;top:126px;width:9px;height:9px;background:#fff;"></div><div class="a" style="left:19px;top:126px;width:9px;height:1px;background:#808080;"></div><div class="a" style="left:19px;top:126px;width:1px;height:9px;background:#808080;"></div><div class="a" style="left:19px;top:134px;width:9px;height:1px;background:#808080;"></div><div class="a" style="left:27px;top:126px;width:1px;height:9px;background:#808080;"></div><div class="a" style="left:21px;top:130px;width:5px;height:1px;background:#000;"></div><div class="a" style="left:23px;top:128px;width:1px;height:5px;background:#000;"></div>
<div class="a" style="left:19px;top:142px;width:9px;height:9px;background:#fff;"></div><div class="a" style="left:19px;top:142px;width:9px;height:1px;background:#808080;"></div><div class="a" style="left:19px;top:142px;width:1px;height:9px;background:#808080;"></div><div class="a" style="left:19px;top:150px;width:9px;height:1px;background:#808080;"></div><div class="a" style="left:27px;top:142px;width:1px;height:9px;background:#808080;"></div><div class="a" style="left:21px;top:146px;width:5px;height:1px;background:#000;"></div>
<div class="a" style="left:14px;top:113px;width:1px;height:1px;background:#808080;"></div>
<div class="a" style="left:16px;top:113px;width:1px;height:1px;background:#808080;"></div>
<div class="a" style="left:23px;top:122px;width:1px;height:1px;background:#808080;"></div>
<div class="a" style="left:23px;top:124px;width:1px;height:1px;background:#808080;"></div>
<div class="a" style="left:23px;top:136px;width:1px;height:1px;background:#808080;"></div>
<div class="a" style="left:23px;top:138px;width:1px;height:1px;background:#808080;"></div>
<div class="a" style="left:23px;top:140px;width:1px;height:1px;background:#808080;"></div>
<div class="a" style="left:29px;top:130px;width:1px;height:1px;background:#808080;"></div>
<div class="a" style="left:31px;top:130px;width:1px;height:1px;background:#808080;"></div>
<div class="a" style="left:29px;top:146px;width:1px;height:1px;background:#808080;"></div>
<div class="a" style="left:31px;top:146px;width:1px;height:1px;background:#808080;"></div>
<div class="a" style="left:39px;top:154px;width:1px;height:1px;background:#808080;"></div>
<div class="a" style="left:39px;top:156px;width:1px;height:1px;background:#808080;"></div>
<div class="a" style="left:39px;top:158px;width:1px;height:1px;background:#808080;"></div>
<div class="a" style="left:39px;top:160px;width:1px;height:1px;background:#808080;"></div>
<div class="a" style="left:39px;top:162px;width:1px;height:1px;background:#808080;"></div>
<div class="a" style="left:41px;top:162px;width:1px;height:1px;background:#808080;"></div>
<div class="a" style="left:43px;top:162px;width:1px;height:1px;background:#808080;"></div>
<div class="a" style="left:45px;top:162px;width:1px;height:1px;background:#808080;"></div>
<div class="a" style="left:47px;top:162px;width:1px;height:1px;background:#808080;"></div>
<svg class="a" style="left:18px;top:107px" width="15" height="14" viewBox="0 0 15 14"><defs><linearGradient id="fg0" x1="0" y1="0" x2="0" y2="1"><stop offset="0" stop-color="#9fd3ff"/><stop offset="1" stop-color="#1f7ff0"/></linearGradient></defs><rect x="0.5" y="7.5" width="13" height="6" fill="url(#fg0)" stroke="#5a5a5a"/><rect x="4" y="0.5" width="2" height="7" fill="#3d8ef0" stroke="#6a6a6a" stroke-width="0.6"/><path d="M1.5 7V2.5" stroke="#555" stroke-width="0.8"/><path d="M2 10H3M4 10H5M6 10H7M8 10H9M10 10H12" stroke="#333" stroke-width="0.8"/><rect x="8.5" y="2.5" width="6" height="9" fill="#fff" stroke="#666"/><path d="M10 5.5H13M10 7.5H13M10 9.5H13" stroke="#555" stroke-width="0.8"/></svg>
<svg class="a" style="left:33px;top:123px" width="14" height="14" viewBox="0 0 14 14"><defs><linearGradient id="fg" x1="0" y1="0" x2="0" y2="1"><stop offset="0" stop-color="#9fd3ff"/><stop offset="1" stop-color="#1f7ff0"/></linearGradient></defs><rect x="0.5" y="7.5" width="13" height="6" fill="url(#fg)" stroke="#5a5a5a"/><rect x="4" y="0.5" width="2" height="7" fill="#3d8ef0" stroke="#6a6a6a" stroke-width="0.6"/><path d="M1.5 7V2.5" stroke="#555" stroke-width="0.8"/><path d="M2 10H3M4 10H5M6 10H7M8 10H9M10 10H12" stroke="#333" stroke-width="0.8"/></svg>
<svg class="a" style="left:33px;top:139px" width="14" height="14" viewBox="0 0 14 14"><defs><linearGradient id="fg2" x1="0" y1="0" x2="0" y2="1"><stop offset="0" stop-color="#9fd3ff"/><stop offset="1" stop-color="#1f7ff0"/></linearGradient></defs><rect x="0.5" y="7.5" width="13" height="6" fill="url(#fg2)" stroke="#5a5a5a"/><rect x="4" y="0.5" width="2" height="7" fill="#3d8ef0" stroke="#6a6a6a" stroke-width="0.6"/><path d="M1.5 7V2.5" stroke="#555" stroke-width="0.8"/><path d="M2 10H3M4 10H5M6 10H7M8 10H9M10 10H12" stroke="#333" stroke-width="0.8"/></svg>
<svg class="a" style="left:49px;top:155px" width="12" height="15" viewBox="0 0 12 15"><path d="M0.5 2.5L2.5 0.5H11.5V14.5H0.5Z" fill="#fbf8d0" stroke="#7a7a7a"/><path d="M2 6.5H10M2 8.5H10M2 10.5H10" stroke="#6a6a6a" stroke-width="0.8"/><path d="M0.5 2.5H2.5V0.5" fill="#fff" stroke="#888" stroke-width="0.7"/></svg>
<div class="a" style="left:64px;top:154px;width:246px;height:16px;background:#ececec;"></div>
<div class="t f11 " style="left:35.5px;top:107.69px;letter-spacing:0.1px">Справочник поставщиков</div>
<div class="t f11 " style="left:49.5px;top:125.69px;letter-spacing:0.3px">ООО "ЖБК"</div>
<div class="t f11 " style="left:49.5px;top:141.19px;letter-spacing:0.25px">ООО "Кабель"</div>
<div class="t f11 " style="left:66.5px;top:156.69px;letter-spacing:0.2px">4 кв.2024г с НДС</div>
<div class="t f11 " style="left:341px;top:109.69px;">Наименование</div>
<div class="a" style="left:341px;top:123px;width:1410px;height:1px;background:#a0a0a0;"></div><div class="a" style="left:341px;top:123px;width:1px;height:21px;background:#a0a0a0;"></div><div class="a" style="left:341px;top:143px;width:1410px;height:1px;background:#fff;"></div><div class="a" style="left:1750px;top:123px;width:1px;height:21px;background:#fff;"></div>
<div class="t f11 " style="left:344px;top:127.69px;">4 кв.2024г с НДС</div>
<div class="a" style="left:339px;top:154px;width:7px;height:1px;background:#a0a0a0;"></div>
<div class="a" style="left:340px;top:155px;width:6px;height:1px;background:#fff;"></div>
<div class="a" style="left:480px;top:154px;width:8px;height:1px;background:#a0a0a0;"></div>
<div class="a" style="left:480px;top:155px;width:8px;height:1px;background:#fff;"></div>
<div class="a" style="left:339px;top:154px;width:1px;height:38px;background:#a0a0a0;"></div>
<div class="a" style="left:340px;top:155px;width:1px;height:36px;background:#fff;"></div>
<div class="a" style="left:486px;top:154px;width:1px;height:37px;background:#a0a0a0;"></div>
<div class="a" style="left:487px;top:154px;width:1px;height:38px;background:#fff;"></div>
<div class="a" style="left:339px;top:190px;width:148px;height:1px;background:#a0a0a0;"></div>
<div class="a" style="left:339px;top:191px;width:149px;height:1px;background:#fff;"></div>
<div class="a" style="left:348px;top:150px;width:13px;height:13px;background:#f0f0f0;"></div><div class="a" style="left:348px;top:150px;width:13px;height:1px;background:#a0a0a0;"></div><div class="a" style="left:348px;top:150px;width:1px;height:13px;background:#a0a0a0;"></div><div class="a" style="left:348px;top:162px;width:13px;height:1px;background:#fff;"></div><div class="a" style="left:360px;top:150px;width:1px;height:13px;background:#fff;"></div>
<div class="a" style="left:349px;top:151px;width:11px;height:1px;background:#696969;"></div>
<div class="a" style="left:349px;top:151px;width:1px;height:11px;background:#696969;"></div>
<svg class="a" style="left:350px;top:152px" width="10" height="10" viewBox="0 0 10 10"><path d="M1.5 4.5L3.8 7L8.5 2" stroke="#a0a0a0" stroke-width="1.8" fill="none"/></svg>
<div class="t f11 dis" style="left:364px;top:151.19px;">цены в прайсе с НДС</div>
<div class="t f11 " style="left:348.5px;top:173.69px;">НДС:</div>
<div class="a" style="left:385px;top:168px;width:75px;height:1px;background:#a0a0a0;"></div><div class="a" style="left:385px;top:168px;width:1px;height:20px;background:#a0a0a0;"></div><div class="a" style="left:385px;top:187px;width:75px;height:1px;background:#fff;"></div><div class="a" style="left:459px;top:168px;width:1px;height:20px;background:#fff;"></div>
<div class="t f11 dis" style="left:443.5px;top:172.69px;">20</div>
<div class="t f11 " style="left:463.5px;top:172.69px;">%</div>
<div class="t f11 " style="left:339.5px;top:200.19px;">Коэф. пересчета валюты</div>
<div class="a" style="left:339px;top:213px;width:150px;height:1px;background:#a0a0a0;"></div><div class="a" style="left:339px;top:213px;width:1px;height:21px;background:#a0a0a0;"></div><div class="a" style="left:339px;top:233px;width:150px;height:1px;background:#fff;"></div><div class="a" style="left:488px;top:213px;width:1px;height:21px;background:#fff;"></div>
<div class="t f11 dis" style="left:478.5px;top:217.69px;">1</div>
<div class="t f11 " style="left:504.5px;top:155.19px;">Дата прайса</div>
<div class="a" style="left:572px;top:152px;width:87px;height:1px;background:#a0a0a0;"></div><div class="a" style="left:572px;top:152px;width:1px;height:19px;background:#a0a0a0;"></div><div class="a" style="left:572px;top:170px;width:87px;height:1px;background:#fff;"></div><div class="a" style="left:658px;top:152px;width:1px;height:19px;background:#fff;"></div>
<div class="a" style="left:642px;top:153px;width:15px;height:1px;background:#f0f0f0;"></div><div class="a" style="left:642px;top:153px;width:1px;height:16px;background:#f0f0f0;"></div><div class="a" style="left:642px;top:168px;width:15px;height:1px;background:#a0a0a0;"></div><div class="a" style="left:656px;top:153px;width:1px;height:16px;background:#a0a0a0;"></div>
<svg class="a" style="left:646px;top:160px" width="8" height="5" viewBox="0 0 8 5"><path d="M0 0H7L3.5 4Z" fill="#a0a0a0"/></svg>
<div class="t f11 " style="left:504.5px;top:183.69px;letter-spacing:0.1px">Дата последнего изменения</div>
<div class="a" style="left:504px;top:198px;width:155px;height:1px;background:#a0a0a0;"></div><div class="a" style="left:504px;top:198px;width:1px;height:21px;background:#a0a0a0;"></div><div class="a" style="left:504px;top:218px;width:155px;height:1px;background:#fff;"></div><div class="a" style="left:658px;top:198px;width:1px;height:21px;background:#fff;"></div>
<div class="a" style="left:505px;top:199px;width:152px;height:1px;background:#696969;"></div>
<div class="a" style="left:505px;top:199px;width:1px;height:18px;background:#696969;"></div>
<div class="t f11 " style="left:507.5px;top:203.19px;letter-spacing:-0.17px">23.12.2024 15:10:51</div>
<div class="t f11 " style="left:504px;top:227.19px;letter-spacing:0.1px">Автор последнего изменения</div>
<div class="a" style="left:504px;top:241px;width:155px;height:1px;background:#a0a0a0;"></div><div class="a" style="left:504px;top:241px;width:1px;height:21px;background:#a0a0a0;"></div><div class="a" style="left:504px;top:261px;width:155px;height:1px;background:#fff;"></div><div class="a" style="left:658px;top:241px;width:1px;height:21px;background:#fff;"></div>
<div class="a" style="left:505px;top:242px;width:152px;height:1px;background:#696969;"></div>
<div class="a" style="left:505px;top:242px;width:1px;height:18px;background:#696969;"></div>
<div class="t f11 " style="left:507px;top:245.69px;">Администратор</div>
<div class="a" style="left:336px;top:288px;width:242px;height:1px;background:#fff;"></div>
<div class="a" style="left:625px;top:288px;width:1131px;height:1px;background:#fff;"></div>
<div class="a" style="left:340px;top:270px;width:237px;height:1px;background:#fff;"></div>
<div class="a" style="left:339px;top:271px;width:1px;height:17px;background:#fff;"></div>
<div class="t f11 " style="left:344.5px;top:275.19px;letter-spacing:0.05px">Позиции прайса привязанные к материалам</div>
<div class="a" style="left:579px;top:268px;width:44px;height:1px;background:#fff;"></div>
<div class="a" style="left:578px;top:269px;width:1px;height:20px;background:#fff;"></div>
<div class="a" style="left:623px;top:269px;width:1px;height:20px;background:#696969;"></div>
<div class="a" style="left:624px;top:270px;width:1px;height:18px;background:#a0a0a0;"></div>
<div class="t f11 " style="left:585.5px;top:273.19px;">Прайс</div>
<div class="a" style="left:1754px;top:289px;width:1px;height:797px;background:#a0a0a0;"></div>
<div class="a" style="left:1755px;top:289px;width:1px;height:798px;background:#696969;"></div>
<div class="a" style="left:336px;top:1085px;width:1419px;height:1px;background:#a0a0a0;"></div>
<div class="a" style="left:336px;top:1086px;width:1420px;height:1px;background:#696969;"></div>
<div class="a" style="left:340px;top:294px;width:13px;height:13px;background:#fff;"></div><div class="a" style="left:340px;top:294px;width:13px;height:1px;background:#a0a0a0;"></div><div class="a" style="left:340px;top:294px;width:1px;height:13px;background:#a0a0a0;"></div><div class="a" style="left:340px;top:306px;width:13px;height:1px;background:#fff;"></div><div class="a" style="left:352px;top:294px;width:1px;height:13px;background:#fff;"></div>
<div class="a" style="left:341px;top:295px;width:11px;height:1px;background:#696969;"></div>
<div class="a" style="left:341px;top:295px;width:1px;height:11px;background:#696969;"></div>
<div class="a" style="left:341px;top:305px;width:11px;height:1px;background:#e3e3e3;"></div>
<div class="a" style="left:351px;top:295px;width:1px;height:11px;background:#e3e3e3;"></div>
<div class="t f11 " style="left:359px;top:294.69px;letter-spacing:0.06px">Показывать позиции прайса</div>
<div class="a" style="left:0;top:0;width:1759px;height:1120px;clip-path:inset(317px 24px 54px 340px)">
<div class="a" style="left:381px;top:380px;width:104px;height:686px;background:#ffffff;"></div>
<div class="a" style="left:486px;top:380px;width:707px;height:686px;background:#fde4d7;"></div>
<div class="a" style="left:1194px;top:380px;width:82px;height:686px;background:#f7f6dc;"></div>
<div class="a" style="left:1277px;top:380px;width:188px;height:686px;background:#ffffff;"></div>
<div class="a" style="left:1466px;top:380px;width:202px;height:686px;background:#dcf2e2;"></div>
<div class="a" style="left:1669px;top:380px;width:232px;height:686px;background:#ffffff;"></div>
<div class="a" style="left:381px;top:338px;width:1519px;height:41px;background:#d9f0fb;"></div>
<div class="a" style="left:341px;top:318px;width:1559px;height:19px;background:#f0f0f0;"></div>
<div class="a" style="left:341px;top:318px;width:1560px;height:1px;background:#fafafa;"></div>
<div class="a" style="left:381px;top:318px;width:104px;height:19px;background:#a6cdf0;"></div>
<div class="a" style="left:340px;top:317px;width:1561px;height:1px;background:#a0a0a0;"></div>
<div class="a" style="left:341px;top:337px;width:1560px;height:1px;background:#a0a0a0;"></div>
<div class="a" style="left:380px;top:318px;width:1px;height:19px;background:#a0a0a0;"></div>
<div class="a" style="left:1193px;top:318px;width:1px;height:19px;background:#a0a0a0;"></div>
<div class="a" style="left:1276px;top:318px;width:1px;height:19px;background:#a0a0a0;"></div>
<div class="a" style="left:1465px;top:318px;width:1px;height:19px;background:#a0a0a0;"></div>
<div class="a" style="left:1668px;top:318px;width:1px;height:19px;background:#a0a0a0;"></div>
<div class="a" style="left:485px;top:317px;width:1px;height:21px;background:#6f9cc6;"></div>
<div class="a" style="left:381px;top:317px;width:105px;height:1px;background:#6f9cc6;"></div>
<div class="a" style="left:381px;top:337px;width:105px;height:1px;background:#6f9cc6;"></div>
<div class="t f12 " style="left:381px;top:320.84px;width:104px;text-align:center;">A</div>
<div class="t f12 " style="left:486px;top:320.84px;width:707px;text-align:center;">B</div>
<div class="t f12 " style="left:1194px;top:320.84px;width:82px;text-align:center;">C</div>
<div class="t f12 " style="left:1277px;top:320.84px;width:188px;text-align:center;">D</div>
<div class="t f12 " style="left:1466px;top:320.84px;width:202px;text-align:center;">E</div>
<div class="a" style="left:341px;top:338px;width:39px;height:41px;background:#a6cdf0;"></div>
<div class="a" style="left:341px;top:380px;width:39px;height:686px;background:#f0f0f0;"></div>
<div class="a" style="left:340px;top:317px;width:1px;height:749px;background:#a0a0a0;"></div>
<div class="a" style="left:380px;top:317px;width:1px;height:749px;background:#a0a0a0;"></div>
<div class="a" style="left:341px;top:379px;width:39px;height:1px;background:#6f98b8;"></div>
<div class="t f12 " style="left:357px;top:366.84px;">1</div>
<div class="a" style="left:341px;top:400px;width:39px;height:1px;background:#a0a0a0;"></div>
<div class="t f12 " style="left:341px;top:387.84px;width:39px;text-align:center;">2</div>
<div class="a" style="left:341px;top:421px;width:39px;height:1px;background:#a0a0a0;"></div>
<div class="t f12 " style="left:341px;top:408.84px;width:39px;text-align:center;">3</div>
<div class="a" style="left:341px;top:442px;width:39px;height:1px;background:#a0a0a0;"></div>
<div class="t f12 " style="left:341px;top:429.84px;width:39px;text-align:center;">4</div>
<div class="a" style="left:341px;top:463px;width:39px;height:1px;background:#a0a0a0;"></div>
<div class="t f12 " style="left:341px;top:450.84px;width:39px;text-align:center;">5</div>
<div class="a" style="left:341px;top:484px;width:39px;height:1px;background:#a0a0a0;"></div>
<div class="t f12 " style="left:341px;top:471.84px;width:39px;text-align:center;">6</div>
<div class="a" style="left:341px;top:505px;width:39px;height:1px;background:#a0a0a0;"></div>
<div class="t f12 " style="left:341px;top:492.84px;width:39px;text-align:center;">7</div>
<div class="a" style="left:341px;top:526px;width:39px;height:1px;background:#a0a0a0;"></div>
<div class="t f12 " style="left:341px;top:513.84px;width:39px;text-align:center;">8</div>
<div class="a" style="left:341px;top:547px;width:39px;height:1px;background:#a0a0a0;"></div>
<div class="t f12 " style="left:341px;top:534.84px;width:39px;text-align:center;">9</div>
<div class="a" style="left:341px;top:568px;width:39px;height:1px;background:#a0a0a0;"></div>
<div class="t f12 " style="left:341px;top:555.84px;width:39px;text-align:center;">10</div>
<div class="a" style="left:341px;top:589px;width:39px;height:1px;background:#a0a0a0;"></div>
<div class="t f12 " style="left:341px;top:576.84px;width:39px;text-align:center;">11</div>
<div class="a" style="left:341px;top:610px;width:39px;height:1px;background:#a0a0a0;"></div>
<div class="t f12 " style="left:341px;top:597.84px;width:39px;text-align:center;">12</div>
<div class="a" style="left:341px;top:631px;width:39px;height:1px;background:#a0a0a0;"></div>
<div class="t f12 " style="left:341px;top:618.84px;width:39px;text-align:center;">13</div>
<div class="a" style="left:341px;top:652px;width:39px;height:1px;background:#a0a0a0;"></div>
<div class="t f12 " style="left:341px;top:639.84px;width:39px;text-align:center;">14</div>
<div class="a" style="left:341px;top:673px;width:39px;height:1px;background:#a0a0a0;"></div>
<div class="t f12 " style="left:341px;top:660.84px;width:39px;text-align:center;">15</div>
<div class="a" style="left:341px;top:694px;width:39px;height:1px;background:#a0a0a0;"></div>
<div class="t f12 " style="left:341px;top:681.84px;width:39px;text-align:center;">16</div>
<div class="a" style="left:341px;top:715px;width:39px;height:1px;background:#a0a0a0;"></div>
<div class="t f12 " style="left:341px;top:702.84px;width:39px;text-align:center;">17</div>
<div class="a" style="left:341px;top:736px;width:39px;height:1px;background:#a0a0a0;"></div>
<div class="t f12 " style="left:341px;top:723.84px;width:39px;text-align:center;">18</div>
<div class="a" style="left:341px;top:757px;width:39px;height:1px;background:#a0a0a0;"></div>
<div class="t f12 " style="left:341px;top:744.84px;width:39px;text-align:center;">19</div>
<div class="a" style="left:341px;top:778px;width:39px;height:1px;background:#a0a0a0;"></div>
<div class="t f12 " style="left:341px;top:765.84px;width:39px;text-align:center;">20</div>
<div class="a" style="left:341px;top:799px;width:39px;height:1px;background:#a0a0a0;"></div>
<div class="t f12 " style="left:341px;top:786.84px;width:39px;text-align:center;">21</div>
<div class="a" style="left:341px;top:820px;width:39px;height:1px;background:#a0a0a0;"></div>
<div class="t f12 " style="left:341px;top:807.84px;width:39px;text-align:center;">22</div>
<div class="a" style="left:341px;top:841px;width:39px;height:1px;background:#a0a0a0;"></div>
<div class="t f12 " style="left:341px;top:828.84px;width:39px;text-align:center;">23</div>
<div class="a" style="left:341px;top:862px;width:39px;height:1px;background:#a0a0a0;"></div>
<div class="t f12 " style="left:341px;top:849.84px;width:39px;text-align:center;">24</div>
<div class="a" style="left:341px;top:883px;width:39px;height:1px;background:#a0a0a0;"></div>
<div class="t f12 " style="left:341px;top:870.84px;width:39px;text-align:center;">25</div>
<div class="a" style="left:341px;top:904px;width:39px;height:1px;background:#a0a0a0;"></div>
<div class="t f12 " style="left:341px;top:891.84px;width:39px;text-align:center;">26</div>
<div class="a" style="left:341px;top:925px;width:39px;height:1px;background:#a0a0a0;"></div>
<div class="t f12 " style="left:341px;top:912.84px;width:39px;text-align:center;">27</div>
<div class="a" style="left:341px;top:946px;width:39px;height:1px;background:#a0a0a0;"></div>
<div class="t f12 " style="left:341px;top:933.84px;width:39px;text-align:center;">28</div>
<div class="a" style="left:341px;top:967px;width:39px;height:1px;background:#a0a0a0;"></div>
<div class="t f12 " style="left:341px;top:954.84px;width:39px;text-align:center;">29</div>
<div class="a" style="left:341px;top:988px;width:39px;height:1px;background:#a0a0a0;"></div>
<div class="t f12 " style="left:341px;top:975.84px;width:39px;text-align:center;">30</div>
<div class="a" style="left:341px;top:1009px;width:39px;height:1px;background:#a0a0a0;"></div>
<div class="t f12 " style="left:341px;top:996.84px;width:39px;text-align:center;">31</div>
<div class="a" style="left:341px;top:1030px;width:39px;height:1px;background:#a0a0a0;"></div>
<div class="t f12 " style="left:341px;top:1017.84px;width:39px;text-align:center;">32</div>
<div class="a" style="left:341px;top:1051px;width:39px;height:1px;background:#a0a0a0;"></div>
<div class="t f12 " style="left:341px;top:1038.84px;width:39px;text-align:center;">33</div>
<div class="a" style="left:341px;top:1072px;width:39px;height:1px;background:#a0a0a0;"></div>
<div class="t f12 " style="left:341px;top:1059.84px;width:39px;text-align:center;">34</div>
<div class="a" style="left:381px;top:379px;width:1520px;height:1px;background:#000;"></div>
<div class="a" style="left:381px;top:400px;width:1520px;height:1px;background:#000;"></div>
<div class="a" style="left:381px;top:421px;width:1520px;height:1px;background:#000;"></div>
<div class="a" style="left:381px;top:442px;width:1520px;height:1px;background:#000;"></div>
<div class="a" style="left:381px;top:463px;width:1520px;height:1px;background:#000;"></div>
<div class="a" style="left:381px;top:484px;width:1520px;height:1px;background:#000;"></div>
<div class="a" style="left:381px;top:505px;width:1520px;height:1px;background:#000;"></div>
<div class="a" style="left:381px;top:526px;width:1520px;height:1px;background:#000;"></div>
<div class="a" style="left:381px;top:547px;width:1520px;height:1px;background:#000;"></div>
<div class="a" style="left:381px;top:568px;width:1520px;height:1px;background:#000;"></div>
<div class="a" style="left:381px;top:589px;width:1520px;height:1px;background:#000;"></div>
<div class="a" style="left:381px;top:610px;width:1520px;height:1px;background:#000;"></div>
<div class="a" style="left:381px;top:631px;width:1520px;height:1px;background:#000;"></div>
<div class="a" style="left:381px;top:652px;width:1520px;height:1px;background:#000;"></div>
<div class="a" style="left:381px;top:673px;width:1520px;height:1px;background:#000;"></div>
<div class="a" style="left:381px;top:694px;width:1520px;height:1px;background:#000;"></div>
<div class="a" style="left:381px;top:715px;width:1520px;height:1px;background:#000;"></div>
<div class="a" style="left:381px;top:736px;width:1520px;height:1px;background:#000;"></div>
<div class="a" style="left:381px;top:757px;width:1520px;height:1px;background:#000;"></div>
<div class="a" style="left:381px;top:778px;width:1520px;height:1px;background:#000;"></div>
<div class="a" style="left:381px;top:799px;width:1520px;height:1px;background:#000;"></div>
<div class="a" style="left:381px;top:820px;width:1520px;height:1px;background:#000;"></div>
<div class="a" style="left:381px;top:841px;width:1520px;height:1px;background:#000;"></div>
<div class="a" style="left:381px;top:862px;width:1520px;height:1px;background:#000;"></div>
<div class="a" style="left:381px;top:883px;width:1520px;height:1px;background:#000;"></div>
<div class="a" style="left:381px;top:904px;width:1520px;height:1px;background:#000;"></div>
<div class="a" style="left:381px;top:925px;width:1520px;height:1px;background:#000;"></div>
<div class="a" style="left:381px;top:946px;width:1520px;height:1px;background:#000;"></div>
<div class="a" style="left:381px;top:967px;width:1520px;height:1px;background:#000;"></div>
<div class="a" style="left:381px;top:988px;width:1520px;height:1px;background:#000;"></div>
<div class="a" style="left:381px;top:1009px;width:1520px;height:1px;background:#000;"></div>
<div class="a" style="left:381px;top:1030px;width:1520px;height:1px;background:#000;"></div>
<div class="a" style="left:381px;top:1051px;width:1520px;height:1px;background:#000;"></div>
<div class="a" style="left:381px;top:1072px;width:1520px;height:1px;background:#000;"></div>
<div class="a" style="left:485px;top:338px;width:1px;height:729px;background:#000;"></div>
<div class="a" style="left:1193px;top:338px;width:1px;height:729px;background:#000;"></div>
<div class="a" style="left:1276px;top:338px;width:1px;height:729px;background:#000;"></div>
<div class="a" style="left:1465px;top:338px;width:1px;height:729px;background:#000;"></div>
<div class="a" style="left:1668px;top:338px;width:1px;height:729px;background:#000;"></div>
<div class="t f16 " style="left:381px;top:349.46px;width:104px;text-align:center;font-weight:bold">Код</div>
<div class="t f16 " style="left:486px;top:349.46px;width:707px;text-align:center;font-weight:bold">Наименование строительного ресурса</div>
<div class="t f16 " style="left:1194px;top:349.46px;width:82px;text-align:center;font-weight:bold">Ед. изм.</div>
<div class="t f16 " style="left:1277px;top:349.46px;width:188px;text-align:center;font-weight:bold">Цена без НДС, руб</div>
<div class="t f16 " style="left:1466px;top:349.46px;width:202px;text-align:center;font-weight:bold">Цена с НДС, руб</div>
<div class="t f16 " style="left:1703px;top:340.46px;font-weight:bold">Наименование</div>
<div class="t f16 " style="left:379px;top:382.46px;width:104px;text-align:center;">21.1.05.04</div>
<div class="t f16 " style="left:489.5px;top:381.46px;letter-spacing:-0.12px">Кабель КГБ 2x0,35 Ч</div>
<div class="t f16 " style="left:1194px;top:382.46px;width:82px;text-align:center;">км</div>
<div class="t f16 " style="left:1276px;top:382.46px;width:188px;text-align:center;">7002,44</div>
<div class="t f16 " style="left:1465px;top:382.46px;width:202px;text-align:center;">8402,93</div>
<div class="t f16 " style="left:379px;top:403.46px;width:104px;text-align:center;">21.1.05.04</div>
<div class="t f16 " style="left:489.5px;top:402.46px;letter-spacing:-0.12px">Кабель КГБ 2x0,50 Ч</div>
<div class="t f16 " style="left:1194px;top:403.46px;width:82px;text-align:center;">км</div>
<div class="t f16 " style="left:1276px;top:403.46px;width:188px;text-align:center;">9946,55</div>
<div class="t f16 " style="left:1465px;top:403.46px;width:202px;text-align:center;">11935,86</div>
<div class="t f16 " style="left:379px;top:424.46px;width:104px;text-align:center;">21.1.05.04</div>
<div class="t f16 " style="left:489.5px;top:423.46px;letter-spacing:-0.12px">Кабель КГБ 3x0,50 Ч</div>
<div class="t f16 " style="left:1194px;top:424.46px;width:82px;text-align:center;">км</div>
<div class="t f16 " style="left:1276px;top:424.46px;width:188px;text-align:center;">13255,97</div>
<div class="t f16 " style="left:1465px;top:424.46px;width:202px;text-align:center;">15907,16</div>
<div class="t f16 " style="left:379px;top:445.46px;width:104px;text-align:center;">21.1.05.04</div>
<div class="t f16 " style="left:489.5px;top:444.46px;letter-spacing:-0.12px">Кабель КГБ 3x0,75 Ч</div>
<div class="t f16 " style="left:1194px;top:445.46px;width:82px;text-align:center;">км</div>
<div class="t f16 " style="left:1276px;top:445.46px;width:188px;text-align:center;">18964,65</div>
<div class="t f16 " style="left:1465px;top:445.46px;width:202px;text-align:center;">22757,58</div>
<div class="t f16 " style="left:379px;top:466.46px;width:104px;text-align:center;">21.1.05.04</div>
<div class="t f16 " style="left:489.5px;top:465.46px;letter-spacing:-0.12px">Кабель КГБ 3x1,0 Ч</div>
<div class="t f16 " style="left:1194px;top:466.46px;width:82px;text-align:center;">км</div>
<div class="t f16 " style="left:1276px;top:466.46px;width:188px;text-align:center;">22050,25</div>
<div class="t f16 " style="left:1465px;top:466.46px;width:202px;text-align:center;">26460,30</div>
<div class="t f16 " style="left:379px;top:487.46px;width:104px;text-align:center;">21.1.05.04</div>
<div class="t f16 " style="left:489.5px;top:486.46px;letter-spacing:-0.12px">Кабель КГБ 3x1,5 С</div>
<div class="t f16 " style="left:1194px;top:487.46px;width:82px;text-align:center;">км</div>
<div class="t f16 " style="left:1276px;top:487.46px;width:188px;text-align:center;">29373,80</div>
<div class="t f16 " style="left:1465px;top:487.46px;width:202px;text-align:center;">35248,56</div>
<div class="t f16 " style="left:379px;top:508.46px;width:104px;text-align:center;">21.1.05.04</div>
<div class="t f16 " style="left:489.5px;top:507.46px;letter-spacing:-0.12px">Кабель КГБ 3x1,5 Ч</div>
<div class="t f16 " style="left:1194px;top:508.46px;width:82px;text-align:center;">км</div>
<div class="t f16 " style="left:1276px;top:508.46px;width:188px;text-align:center;">29496,18</div>
<div class="t f16 " style="left:1465px;top:508.46px;width:202px;text-align:center;">35395,42</div>
<div class="t f16 " style="left:379px;top:529.46px;width:104px;text-align:center;">21.1.05.04</div>
<div class="t f16 " style="left:489.5px;top:528.46px;letter-spacing:-0.12px">Кабель КГБ 3x1,5 Ч</div>
<div class="t f16 " style="left:1194px;top:529.46px;width:82px;text-align:center;">км</div>
<div class="t f16 " style="left:1276px;top:529.46px;width:188px;text-align:center;">29373,80</div>
<div class="t f16 " style="left:1465px;top:529.46px;width:202px;text-align:center;">35248,56</div>
<div class="t f16 " style="left:379px;top:550.46px;width:104px;text-align:center;">21.1.05.04</div>
<div class="t f16 " style="left:489.5px;top:549.46px;letter-spacing:-0.12px">Кабель КГБ 3x2,50 С</div>
<div class="t f16 " style="left:1194px;top:550.46px;width:82px;text-align:center;">км</div>
<div class="t f16 " style="left:1276px;top:550.46px;width:188px;text-align:center;">47885,02</div>
<div class="t f16 " style="left:1465px;top:550.46px;width:202px;text-align:center;">57462,02</div>
<div class="t f16 " style="left:379px;top:571.46px;width:104px;text-align:center;">21.1.05.04</div>
<div class="t f16 " style="left:489.5px;top:570.46px;letter-spacing:-0.12px">Кабель КГБ 3x2,50 С</div>
<div class="t f16 " style="left:1194px;top:571.46px;width:82px;text-align:center;">км</div>
<div class="t f16 " style="left:1276px;top:571.46px;width:188px;text-align:center;">46021,59</div>
<div class="t f16 " style="left:1465px;top:571.46px;width:202px;text-align:center;">55225,91</div>
<div class="t f16 " style="left:379px;top:592.46px;width:104px;text-align:center;">21.1.05.04</div>
<div class="t f16 " style="left:489.5px;top:591.46px;letter-spacing:-0.12px">Кабель КГБ 3x2,50 Ч</div>
<div class="t f16 " style="left:1194px;top:592.46px;width:82px;text-align:center;">км</div>
<div class="t f16 " style="left:1276px;top:592.46px;width:188px;text-align:center;">47885,02</div>
<div class="t f16 " style="left:1465px;top:592.46px;width:202px;text-align:center;">57462,02</div>
<div class="t f16 " style="left:379px;top:613.46px;width:104px;text-align:center;">21.1.05.04</div>
<div class="t f16 " style="left:489.5px;top:612.46px;letter-spacing:-0.12px">Кабель КГБ 3x2,50 Ч</div>
<div class="t f16 " style="left:1194px;top:613.46px;width:82px;text-align:center;">км</div>
<div class="t f16 " style="left:1276px;top:613.46px;width:188px;text-align:center;">46176,07</div>
<div class="t f16 " style="left:1465px;top:613.46px;width:202px;text-align:center;">55411,28</div>
<div class="t f16 " style="left:379px;top:634.46px;width:104px;text-align:center;">21.1.05.04</div>
<div class="t f16 " style="left:489.5px;top:633.46px;letter-spacing:-0.12px">Кабель КГБ 3x2,50 Ч</div>
<div class="t f16 " style="left:1194px;top:634.46px;width:82px;text-align:center;">км</div>
<div class="t f16 " style="left:1276px;top:634.46px;width:188px;text-align:center;">46021,59</div>
<div class="t f16 " style="left:1465px;top:634.46px;width:202px;text-align:center;">55225,91</div>
<div class="t f16 " style="left:379px;top:655.46px;width:104px;text-align:center;">21.1.05.04</div>
<div class="t f16 " style="left:489.5px;top:654.46px;letter-spacing:-0.12px">Кабель КГБ 3x4,0 С</div>
<div class="t f16 " style="left:1194px;top:655.46px;width:82px;text-align:center;">км</div>
<div class="t f16 " style="left:1276px;top:655.46px;width:188px;text-align:center;">70654,56</div>
<div class="t f16 " style="left:1465px;top:655.46px;width:202px;text-align:center;">84785,47</div>
<div class="t f16 " style="left:379px;top:676.46px;width:104px;text-align:center;">21.1.05.04</div>
<div class="t f16 " style="left:489.5px;top:675.46px;letter-spacing:-0.12px">Кабель КГБ 4x1,0 Ч</div>
<div class="t f16 " style="left:1194px;top:676.46px;width:82px;text-align:center;">км</div>
<div class="t f16 " style="left:1276px;top:676.46px;width:188px;text-align:center;">24892,59</div>
<div class="t f16 " style="left:1465px;top:676.46px;width:202px;text-align:center;">29871,11</div>
<div class="t f16 " style="left:379px;top:697.46px;width:104px;text-align:center;">21.1.05.04</div>
<div class="t f16 " style="left:489.5px;top:696.46px;letter-spacing:-0.12px">Кабель КГБ 4x1,5 Ч</div>
<div class="t f16 " style="left:1194px;top:697.46px;width:82px;text-align:center;">км</div>
<div class="t f16 " style="left:1276px;top:697.46px;width:188px;text-align:center;">38139,59</div>
<div class="t f16 " style="left:1465px;top:697.46px;width:202px;text-align:center;">45767,51</div>
<div class="t f16 " style="left:379px;top:718.46px;width:104px;text-align:center;">21.1.05.04</div>
<div class="t f16 " style="left:489.5px;top:717.46px;letter-spacing:-0.12px">Кабель КГБ 4x2,50 С</div>
<div class="t f16 " style="left:1194px;top:718.46px;width:82px;text-align:center;">км</div>
<div class="t f16 " style="left:1276px;top:718.46px;width:188px;text-align:center;">61499,36</div>
<div class="t f16 " style="left:1465px;top:718.46px;width:202px;text-align:center;">73799,23</div>
<div class="t f16 " style="left:379px;top:739.46px;width:104px;text-align:center;">21.1.05.04</div>
<div class="t f16 " style="left:489.5px;top:738.46px;letter-spacing:-0.12px">Кабель КГБ 4x2,50 Ч</div>
<div class="t f16 " style="left:1194px;top:739.46px;width:82px;text-align:center;">км</div>
<div class="t f16 " style="left:1276px;top:739.46px;width:188px;text-align:center;">61499,36</div>
<div class="t f16 " style="left:1465px;top:739.46px;width:202px;text-align:center;">73799,23</div>
<div class="t f16 " style="left:379px;top:760.46px;width:104px;text-align:center;">21.1.05.04</div>
<div class="t f16 " style="left:489.5px;top:759.46px;letter-spacing:-0.12px">Кабель КГБ 4x4,0 С</div>
<div class="t f16 " style="left:1194px;top:760.46px;width:82px;text-align:center;">км</div>
<div class="t f16 " style="left:1276px;top:760.46px;width:188px;text-align:center;">102354,14</div>
<div class="t f16 " style="left:1465px;top:760.46px;width:202px;text-align:center;">122824,97</div>
<div class="t f16 " style="left:379px;top:781.46px;width:104px;text-align:center;">21.1.05.04</div>
<div class="t f16 " style="left:489.5px;top:780.46px;letter-spacing:-0.12px">Кабель КГБ 4x4,0 С</div>
<div class="t f16 " style="left:1194px;top:781.46px;width:82px;text-align:center;">км</div>
<div class="t f16 " style="left:1276px;top:781.46px;width:188px;text-align:center;">93313,69</div>
<div class="t f16 " style="left:1465px;top:781.46px;width:202px;text-align:center;">111976,43</div>
<div class="t f16 " style="left:379px;top:802.46px;width:104px;text-align:center;">21.1.05.04</div>
<div class="t f16 " style="left:489.5px;top:801.46px;letter-spacing:-0.12px">Кабель КГБ 4x6,0 С</div>
<div class="t f16 " style="left:1194px;top:802.46px;width:82px;text-align:center;">км</div>
<div class="t f16 " style="left:1276px;top:802.46px;width:188px;text-align:center;">133871,25</div>
<div class="t f16 " style="left:1465px;top:802.46px;width:202px;text-align:center;">160645,50</div>
<div class="t f16 " style="left:379px;top:823.46px;width:104px;text-align:center;">21.1.05.04</div>
<div class="t f16 " style="left:489.5px;top:822.46px;letter-spacing:-0.12px">Кабель КГБ 5x0,75 Ч</div>
<div class="t f16 " style="left:1194px;top:823.46px;width:82px;text-align:center;">км</div>
<div class="t f16 " style="left:1276px;top:823.46px;width:188px;text-align:center;">26497,84</div>
<div class="t f16 " style="left:1465px;top:823.46px;width:202px;text-align:center;">31797,41</div>
<div class="t f16 " style="left:379px;top:844.46px;width:104px;text-align:center;">21.1.05.04</div>
<div class="t f16 " style="left:489.5px;top:843.46px;letter-spacing:-0.12px">Кабель КГБ 5x1,0 Ч</div>
<div class="t f16 " style="left:1194px;top:844.46px;width:82px;text-align:center;">км</div>
<div class="t f16 " style="left:1276px;top:844.46px;width:188px;text-align:center;">31912,67</div>
<div class="t f16 " style="left:1465px;top:844.46px;width:202px;text-align:center;">38295,20</div>
<div class="t f16 " style="left:379px;top:865.46px;width:104px;text-align:center;">21.1.05.04</div>
<div class="t f16 " style="left:489.5px;top:864.46px;letter-spacing:-0.12px">Кабель КГБ 6x0,75 Ч</div>
<div class="t f16 " style="left:1194px;top:865.46px;width:82px;text-align:center;">км</div>
<div class="t f16 " style="left:1276px;top:865.46px;width:188px;text-align:center;">32162,74</div>
<div class="t f16 " style="left:1465px;top:865.46px;width:202px;text-align:center;">38595,29</div>
<div class="t f16 " style="left:379px;top:886.46px;width:104px;text-align:center;">21.1.05.04</div>
<div class="t f16 " style="left:489.5px;top:885.46px;letter-spacing:-0.12px">Кабель КГБ 6x1,0 Ч</div>
<div class="t f16 " style="left:1194px;top:886.46px;width:82px;text-align:center;">км</div>
<div class="t f16 " style="left:1276px;top:886.46px;width:188px;text-align:center;">38287,08</div>
<div class="t f16 " style="left:1465px;top:886.46px;width:202px;text-align:center;">45944,50</div>
<div class="t f16 " style="left:379px;top:907.46px;width:104px;text-align:center;">21.1.05.04</div>
<div class="t f16 " style="left:489.5px;top:906.46px;letter-spacing:-0.12px">Кабель КГтп 1x10,0 Ч</div>
<div class="t f16 " style="left:1194px;top:907.46px;width:82px;text-align:center;">км</div>
<div class="t f16 " style="left:1276px;top:907.46px;width:188px;text-align:center;">55094,23</div>
<div class="t f16 " style="left:1465px;top:907.46px;width:202px;text-align:center;">66113,08</div>
<div class="t f16 " style="left:379px;top:928.46px;width:104px;text-align:center;">21.1.05.04</div>
<div class="t f16 " style="left:489.5px;top:927.46px;letter-spacing:-0.12px">Кабель КГтп 1x16,0 Ч</div>
<div class="t f16 " style="left:1194px;top:928.46px;width:82px;text-align:center;">км</div>
<div class="t f16 " style="left:1276px;top:928.46px;width:188px;text-align:center;">83910,37</div>
<div class="t f16 " style="left:1465px;top:928.46px;width:202px;text-align:center;">100692,44</div>
<div class="t f16 " style="left:379px;top:949.46px;width:104px;text-align:center;">21.1.05.04</div>
<div class="t f16 " style="left:489.5px;top:948.46px;letter-spacing:-0.12px">Кабель КГтп 1x2,5 Ч</div>
<div class="t f16 " style="left:1194px;top:949.46px;width:82px;text-align:center;">км</div>
<div class="t f16 " style="left:1276px;top:949.46px;width:188px;text-align:center;">13948,83</div>
<div class="t f16 " style="left:1465px;top:949.46px;width:202px;text-align:center;">16738,60</div>
<div class="t f16 " style="left:379px;top:970.46px;width:104px;text-align:center;">21.1.05.04</div>
<div class="t f16 " style="left:489.5px;top:969.46px;letter-spacing:-0.12px">Кабель КГтп 1x240,0 Ч</div>
<div class="t f16 " style="left:1194px;top:970.46px;width:82px;text-align:center;">км</div>
<div class="t f16 " style="left:1276px;top:970.46px;width:188px;text-align:center;">1237448,18</div>
<div class="t f16 " style="left:1465px;top:970.46px;width:202px;text-align:center;">1484937,82</div>
<div class="t f16 " style="left:379px;top:991.46px;width:104px;text-align:center;">21.1.05.04</div>
<div class="t f16 " style="left:489.5px;top:990.46px;letter-spacing:-0.12px">Кабель КГтп 1x25,0 Ч</div>
<div class="t f16 " style="left:1194px;top:991.46px;width:82px;text-align:center;">км</div>
<div class="t f16 " style="left:1276px;top:991.46px;width:188px;text-align:center;">131704,08</div>
<div class="t f16 " style="left:1465px;top:991.46px;width:202px;text-align:center;">158044,90</div>
<div class="t f16 " style="left:379px;top:1012.46px;width:104px;text-align:center;">21.1.05.04</div>
<div class="t f16 " style="left:489.5px;top:1011.46px;letter-spacing:-0.12px">Кабель КГтп 1x35,0 Ч</div>
<div class="t f16 " style="left:1194px;top:1012.46px;width:82px;text-align:center;">км</div>
<div class="t f16 " style="left:1276px;top:1012.46px;width:188px;text-align:center;">192290,46</div>
<div class="t f16 " style="left:1465px;top:1012.46px;width:202px;text-align:center;">230748,55</div>
<div class="t f16 " style="left:379px;top:1033.46px;width:104px;text-align:center;">21.1.05.04</div>
<div class="t f16 " style="left:489.5px;top:1032.46px;letter-spacing:-0.12px">Кабель КГтп 1x4,0 Ч</div>
<div class="t f16 " style="left:1194px;top:1033.46px;width:82px;text-align:center;">км</div>
<div class="t f16 " style="left:1276px;top:1033.46px;width:188px;text-align:center;">21903,07</div>
<div class="t f16 " style="left:1465px;top:1033.46px;width:202px;text-align:center;">26283,68</div>
<div class="t f16 " style="left:379px;top:1054.46px;width:104px;text-align:center;">21.1.05.04</div>
<div class="t f16 " style="left:489.5px;top:1053.46px;letter-spacing:-0.12px">Кабель КГтп 1x50,0 Ч</div>
<div class="t f16 " style="left:1194px;top:1054.46px;width:82px;text-align:center;">км</div>
<div class="t f16 " style="left:1276px;top:1054.46px;width:188px;text-align:center;">271742,18</div>
<div class="t f16 " style="left:1465px;top:1054.46px;width:202px;text-align:center;">326090,62</div>
<div class="a" style="left:380px;top:337px;width:107px;height:3px;background:#0078d7;"></div>
<div class="a" style="left:380px;top:377px;width:107px;height:4px;background:#0078d7;"></div>
<div class="a" style="left:380px;top:337px;width:3px;height:44px;background:#0078d7;"></div>
<div class="a" style="left:483px;top:337px;width:4px;height:44px;background:#0078d7;"></div>
</div>
<div class="a" style="left:1735px;top:317px;width:17px;height:749px;background-color:#f0f0f0;background-image:conic-gradient(#fff 25%,transparent 0 50%,#fff 0 75%,transparent 0);background-size:2px 2px"></div>
<div class="a" style="left:340px;top:1066px;width:1395px;height:17px;background-color:#f0f0f0;background-image:conic-gradient(#fff 25%,transparent 0 50%,#fff 0 75%,transparent 0);background-size:2px 2px"></div>
<div class="a" style="left:1735px;top:1066px;width:19px;height:19px;background:#f0f0f0;"></div>
<div class="a" style="left:1752px;top:289px;width:2px;height:796px;background:#f0f0f0;"></div>
<div class="a" style="left:336px;top:1083px;width:1418px;height:2px;background:#f0f0f0;"></div>
<div class="a" style="left:1735px;top:317px;width:17px;height:17px;background:#f0f0f0;"></div><div class="a" style="left:1735px;top:317px;width:17px;height:1px;background:#fff;"></div><div class="a" style="left:1735px;top:317px;width:1px;height:17px;background:#fff;"></div><div class="a" style="left:1735px;top:333px;width:17px;height:1px;background:#a0a0a0;"></div><div class="a" style="left:1751px;top:317px;width:1px;height:17px;background:#a0a0a0;"></div>
<div class="a" style="left:1735px;top:334px;width:17px;height:8px;background:#f0f0f0;"></div><div class="a" style="left:1735px;top:334px;width:17px;height:1px;background:#fff;"></div><div class="a" style="left:1735px;top:334px;width:1px;height:8px;background:#fff;"></div><div class="a" style="left:1735px;top:341px;width:17px;height:1px;background:#a0a0a0;"></div><div class="a" style="left:1751px;top:334px;width:1px;height:8px;background:#a0a0a0;"></div>
<div class="a" style="left:1735px;top:1049px;width:17px;height:17px;background:#f0f0f0;"></div><div class="a" style="left:1735px;top:1049px;width:17px;height:1px;background:#fff;"></div><div class="a" style="left:1735px;top:1049px;width:1px;height:17px;background:#fff;"></div><div class="a" style="left:1735px;top:1065px;width:17px;height:1px;background:#a0a0a0;"></div><div class="a" style="left:1751px;top:1049px;width:1px;height:17px;background:#a0a0a0;"></div>
<div class="a" style="left:340px;top:1066px;width:17px;height:17px;background:#f0f0f0;"></div><div class="a" style="left:340px;top:1066px;width:17px;height:1px;background:#fff;"></div><div class="a" style="left:340px;top:1066px;width:1px;height:17px;background:#fff;"></div><div class="a" style="left:340px;top:1082px;width:17px;height:1px;background:#a0a0a0;"></div><div class="a" style="left:356px;top:1066px;width:1px;height:17px;background:#a0a0a0;"></div>
<div class="a" style="left:356px;top:1066px;width:545px;height:17px;background:#f0f0f0;"></div><div class="a" style="left:356px;top:1066px;width:545px;height:1px;background:#fff;"></div><div class="a" style="left:356px;top:1066px;width:1px;height:17px;background:#fff;"></div><div class="a" style="left:356px;top:1082px;width:545px;height:1px;background:#a0a0a0;"></div><div class="a" style="left:900px;top:1066px;width:1px;height:17px;background:#a0a0a0;"></div>
<div class="a" style="left:1718px;top:1066px;width:17px;height:17px;background:#f0f0f0;"></div><div class="a" style="left:1718px;top:1066px;width:17px;height:1px;background:#fff;"></div><div class="a" style="left:1718px;top:1066px;width:1px;height:17px;background:#fff;"></div><div class="a" style="left:1718px;top:1082px;width:17px;height:1px;background:#a0a0a0;"></div><div class="a" style="left:1734px;top:1066px;width:1px;height:17px;background:#a0a0a0;"></div>
<svg class="a" style="left:1740px;top:324px" width="7" height="4" viewBox="0 0 7 4"><path d="M3.5 0L7 4H0Z" fill="#000"/></svg>
<svg class="a" style="left:1740px;top:1056px" width="7" height="4" viewBox="0 0 7 4"><path d="M0 0H7L3.5 4Z" fill="#000"/></svg>
<svg class="a" style="left:346px;top:1071px" width="4" height="7" viewBox="0 0 4 7"><path d="M4 0V7L0 3.5Z" fill="#000"/></svg>
<svg class="a" style="left:1724px;top:1071px" width="4" height="7" viewBox="0 0 4 7"><path d="M0 0V7L4 3.5Z" fill="#000"/></svg>
<div class="a" style="left:1px;top:1087px;width:1755px;height:1px;background:#f6f6f6;"></div>
<div class="a" style="left:2px;top:1090px;width:85px;height:1px;background:#a0a0a0;"></div><div class="a" style="left:2px;top:1090px;width:1px;height:26px;background:#a0a0a0;"></div><div class="a" style="left:2px;top:1115px;width:85px;height:1px;background:#fff;"></div><div class="a" style="left:86px;top:1090px;width:1px;height:26px;background:#fff;"></div>
<div class="a" style="left:91px;top:1090px;width:296px;height:1px;background:#a0a0a0;"></div><div class="a" style="left:91px;top:1090px;width:1px;height:26px;background:#a0a0a0;"></div><div class="a" style="left:91px;top:1115px;width:296px;height:1px;background:#fff;"></div><div class="a" style="left:386px;top:1090px;width:1px;height:26px;background:#fff;"></div>
<div class="a" style="left:391px;top:1090px;width:1294px;height:1px;background:#a0a0a0;"></div><div class="a" style="left:391px;top:1090px;width:1px;height:26px;background:#a0a0a0;"></div><div class="a" style="left:391px;top:1115px;width:1294px;height:1px;background:#fff;"></div><div class="a" style="left:1684px;top:1090px;width:1px;height:26px;background:#fff;"></div>
<div class="a" style="left:1689px;top:1090px;width:30px;height:1px;background:#a0a0a0;"></div><div class="a" style="left:1689px;top:1090px;width:1px;height:26px;background:#a0a0a0;"></div><div class="a" style="left:1689px;top:1115px;width:30px;height:1px;background:#fff;"></div><div class="a" style="left:1718px;top:1090px;width:1px;height:26px;background:#fff;"></div>
<div class="a" style="left:1723px;top:1090px;width:30px;height:1px;background:#a0a0a0;"></div><div class="a" style="left:1723px;top:1090px;width:1px;height:26px;background:#a0a0a0;"></div><div class="a" style="left:1723px;top:1115px;width:30px;height:1px;background:#fff;"></div><div class="a" style="left:1752px;top:1090px;width:1px;height:26px;background:#fff;"></div>
<div class="a" style="left:88px;top:1088px;width:1px;height:30px;background:#a0a0a0;"></div>
<div class="a" style="left:89px;top:1088px;width:1px;height:30px;background:#fff;"></div>
<div class="a" style="left:388px;top:1088px;width:1px;height:30px;background:#a0a0a0;"></div>
<div class="a" style="left:389px;top:1088px;width:1px;height:30px;background:#fff;"></div>
<div class="a" style="left:1686px;top:1088px;width:1px;height:30px;background:#a0a0a0;"></div>
<div class="a" style="left:1687px;top:1088px;width:1px;height:30px;background:#fff;"></div>
<div class="a" style="left:1720px;top:1088px;width:1px;height:30px;background:#a0a0a0;"></div>
<div class="a" style="left:1721px;top:1088px;width:1px;height:30px;background:#fff;"></div>
<div class="a" style="left:1754px;top:1088px;width:1px;height:30px;background:#a0a0a0;"></div>
<div class="a" style="left:1755px;top:1088px;width:1px;height:30px;background:#fff;"></div>
<div class="a" style="left:1px;top:1117px;width:1755px;height:1px;background:#a0a0a0;"></div>
<div class="a" style="left:1px;top:1118px;width:1755px;height:1px;background:#f4f4f4;"></div>
<div class="t f12 " style="left:396px;top:1096.84px;">Считано 23 строк(и)</div>
<div class="t f12 " style="left:1729px;top:1096.84px;">RU</div>
<svg class="a" style="left:1695px;top:1094px" width="18" height="18" viewBox="0 0 18 18"><rect x="1.5" y="1.5" width="15" height="15" rx="6" fill="#9a9a9a"/><rect x="7.5" y="4" width="3" height="2.5" fill="#fff"/><rect x="7.5" y="7.5" width="3" height="7" fill="#fff"/><path d="M1.5 1L17 16.5" stroke="#ff0000" stroke-width="2.2"/></svg>
</body></html>
